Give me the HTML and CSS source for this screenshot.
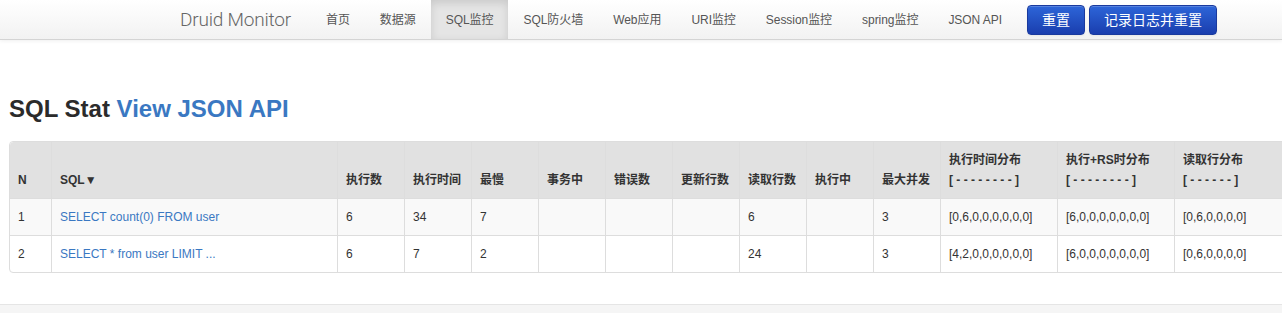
FILE: index.html
```html
<!DOCTYPE html>
<html>

<head>
	<meta charset="utf-8">
	<title>Druid Stat Index</title>
	<link rel="stylesheet" href="styles.css">
</head>

<body class = "body">

	<div class = "navbar">
		<div class = "navInner">
			<a class = "brand" href = "#">Druid Monitor</a>
			<ul class = "nav">
				<li><a href = "#">首页</a></li>
				<li><a href = "#">数据源</a></li>
				<li class = "active"><a href = "#">SQL监控</a></li>
				<li><a href = "#">SQL防火墙</a></li>
				<li><a href = "#">Web应用</a></li>
				<li><a href = "#">URI监控</a></li>
				<li><a href = "#">Session监控</a></li>
				<li><a href = "#">spring监控</a></li>
				<li><a href = "#">JSON API</a></li>
			</ul>
			<div class = "navButtons">
				<a class = "btn" href = "#">重置</a>
				<a class = "btn" href = "#">记录日志并重置</a>
			</div>
		</div>
	</div>

	<div class = "content">
		<h3 class = "pageTitle">SQL Stat <a href = "#">View JSON API</a></h3>

		<div class = "tableWrap">
			<table class = "statTable">
				<colgroup>
					<col class = "colN">
					<col class = "colSql">
					<col class = "colNum"><col class = "colNum"><col class = "colNum">
					<col class = "colNum"><col class = "colNum"><col class = "colNum">
					<col class = "colNum"><col class = "colNum"><col class = "colNum">
					<col class = "colDist"><col class = "colDist"><col class = "colDist">
				</colgroup>
				<thead>
					<tr>
						<th><span>N</span></th>
						<th><span>SQL▼</span></th>
						<th><span>执行数</span></th>
						<th><span>执行时间</span></th>
						<th><span>最慢</span></th>
						<th><span>事务中</span></th>
						<th><span>错误数</span></th>
						<th><span>更新行数</span></th>
						<th><span>读取行数</span></th>
						<th><span>执行中</span></th>
						<th><span>最大并发</span></th>
						<th><span>执行时间分布</span><span>[ - - - - - - - - ]</span></th>
						<th><span>执行+RS时分布</span><span>[ - - - - - - - - ]</span></th>
						<th><span>读取行分布</span><span>[ - - - - - - ]</span></th>
					</tr>
				</thead>
				<tbody>
					<tr class = "odd">
						<td>1</td>
						<td><a href = "#">SELECT count(0) FROM user</a></td>
						<td>6</td>
						<td>34</td>
						<td>7</td>
						<td></td>
						<td></td>
						<td></td>
						<td>6</td>
						<td></td>
						<td>3</td>
						<td>[0,6,0,0,0,0,0,0]</td>
						<td>[6,0,0,0,0,0,0,0]</td>
						<td>[0,6,0,0,0,0]</td>
					</tr>
					<tr>
						<td>2</td>
						<td><a href = "#">SELECT * from user LIMIT ...</a></td>
						<td>6</td>
						<td>7</td>
						<td>2</td>
						<td></td>
						<td></td>
						<td></td>
						<td>24</td>
						<td></td>
						<td>3</td>
						<td>[4,2,0,0,0,0,0,0]</td>
						<td>[6,0,0,0,0,0,0,0]</td>
						<td>[0,6,0,0,0,0]</td>
					</tr>
				</tbody>
			</table>
		</div>
	</div>

	<div class = "footer"></div>

</body>

</html>
```

FILE: styles.css
```css
.body {
	margin: 0;
	background-color: #FFFFFF;
	color: #333333;
	font: 12px/20px "Liberation Sans", "Noto Sans CJK SC", sans-serif;
	overflow: hidden;
}

a {
	text-decoration: none;
}

.navbar {
	height: 39px;
	background: linear-gradient(#FFFFFF, #F2F2F2);
	border-bottom: 1px solid #D4D4D4;
	box-shadow: 0 1px 4px rgba(0, 0, 0, 0.065);
}

.navInner {
	display: flex;
	align-items: center;
	padding-left: 160px;
	height: 39px;
}

.brand {
	padding: 0 20px;
	font: 300 19px/39px Roboto, "Liberation Sans", sans-serif;
	color: #666666;
	letter-spacing: -0.2px;
}

.nav {
	display: flex;
	margin: 0;
	padding: 0;
	list-style: none;
	height: 39px;
}

.nav li a {
	display: block;
	height: 20px;
	padding: 10px 15px 9px;
	color: #555555;
	font-size: 12px;
	line-height: 20px;
	letter-spacing: -0.05px;
}

.nav li.active a {
	background-color: #E5E5E5;
	box-shadow: inset 0 3px 8px rgba(0, 0, 0, 0.125);
	color: #555555;
}

.navButtons {
	display: flex;
	gap: 4px;
	margin-left: 10px;
}

.btn {
	display: block;
	height: 20px;
	padding: 4px 14px;
	font-size: 14px;
	line-height: 20px;
	color: #FFFFFF;
	background: linear-gradient(#2D65D8, #1A3EAE);
	border: 1px solid #1A3A9E;
	border-radius: 4px;
	box-shadow: inset 0 1px 0 rgba(255, 255, 255, 0.2), 0 1px 2px rgba(0, 0, 0, 0.05);
}

.content {
	padding: 0 0 0 9px;
}

.pageTitle {
	margin: 49px 0 12px;
	font: bold 24px/40px "Liberation Sans", sans-serif;
	color: #2B2B2B;
}

.pageTitle a {
	color: #3A78C2;
}

.tableWrap {
	width: 1400px;
}

.statTable {
	table-layout: fixed;
	width: 1283px;
	border-collapse: separate;
	border-spacing: 0;
	border: 1px solid #DDDDDD;
	border-radius: 4px;
}

.colN {
	width: 41px;
}

.colSql {
	width: 286px;
}

.colNum {
	width: 67px;
}

.colDist {
	width: 117px;
}

.statTable th,
.statTable td {
	padding: 8px;
	text-align: left;
	vertical-align: top;
	border-left: 1px solid #DDDDDD;
	border-top: 1px solid #DDDDDD;
	white-space: nowrap;
	overflow: hidden;
	line-height: 20px;
}

.statTable th {
	height: 39px;
	vertical-align: bottom;
}

.statTable th span {
	display: block;
	height: 20px;
}

.statTable td {
	height: 20px;
}

.statTable th:first-child,
.statTable td:first-child {
	border-left: none;
}

.statTable thead th {
	border-top: none;
	background-color: #E1E1E1;
	font-weight: bold;
}

.statTable thead th:first-child {
	border-top-left-radius: 4px;
}

.statTable .odd td {
	background-color: #F9F9F9;
}

.statTable td a {
	color: #3A78C2;
}

.footer {
	margin-top: 31px;
	height: 30px;
	background-color: #F5F5F5;
	border-top: 1px solid #E5E5E5;
}
```
